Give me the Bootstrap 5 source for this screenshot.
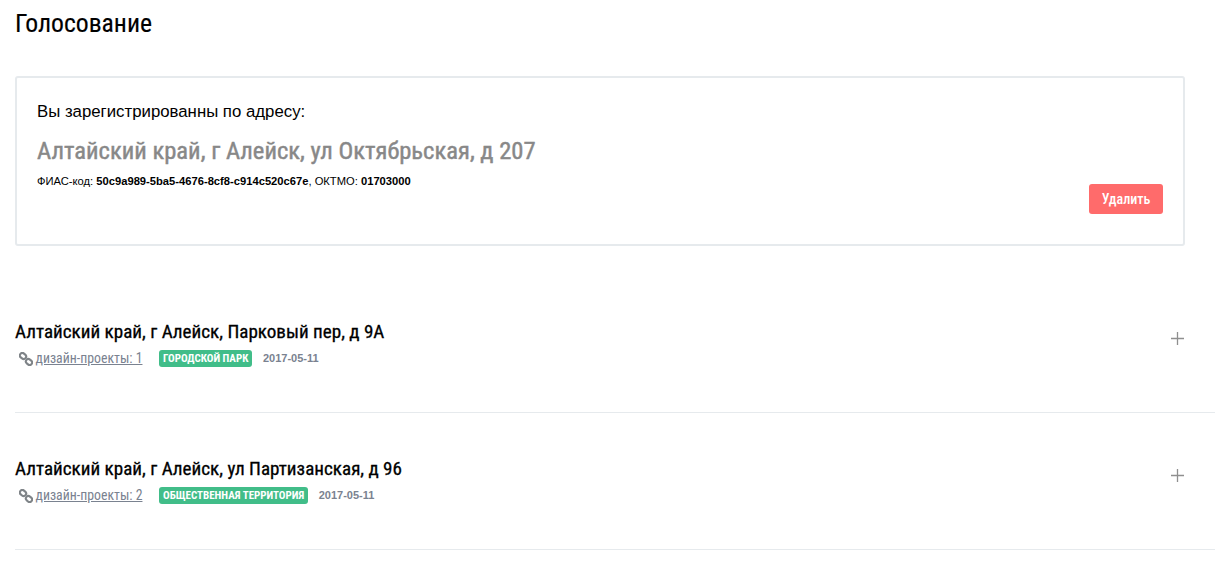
<!DOCTYPE html>
<html lang="ru">
  <head>
    <title>Голосование</title>
    <link href="https://cdn.jsdelivr.net/npm/bootstrap@5.3.3/dist/css/bootstrap.min.css" rel="stylesheet" />
    <style>
      body { background: #fff; color: #000; font-family: "Liberation Sans", Arial, sans-serif; }
      .page-wrap { padding: 0 3px 0 15px; }
      .page-title, .addr-big, .item-title, .item-link, .item-tag, .del-btn {
        font-family: Roboto, "Liberation Sans", sans-serif;
        font-stretch: 75%;
      }
      .page-title { font-size: 25.7px; font-weight: 400; line-height: 30px; margin: 8px 0 38px; -webkit-text-stroke: .15px #000; }
      .addr-box { width: 1170px; height: 170px; border: 2px solid #e6eaed; border-radius: 3px; padding: 23px 20px 22px; }
      .addr-label { font-size: 16.8px; line-height: 22px; margin-bottom: 12px; }
      .addr-big { font-size: 24.6px; font-weight: 400; line-height: 32px; color: #888; margin-bottom: 7px; -webkit-text-stroke: .45px #888; }
      .addr-meta { font-size: 11.2px; line-height: 14px; }
      .del-btn { background: #ff6b6b; color: #fff; border: 0; border-radius: 3px; width: 74px; height: 30px; font-size: 14px; font-weight: 500; padding: 0; }
      .items-list { margin-top: 30px; }
      .item-row { height: 137px; border-bottom: 1px solid #e6eaed; padding-top: 44px; }
      .item-title { font-size: 19.1px; font-weight: 400; line-height: 24px; margin: 0; -webkit-text-stroke: .3px #000; }
      .item-sub { margin-top: 6px; height: 17px; }
      .link-box { width: 127px; margin-right: 17px; padding-left: 4px; white-space: nowrap; }
      .link-ico { width: 14px; height: 14px; margin-right: 3px; flex: none; }
      .item-link { color: #7a8290; font-size: 13.8px; margin-left: -.5px; }
      .item-tag { background: #41bd89; color: #fff; font-size: 11px; font-weight: 700; border-radius: 3px; padding: 0 4px; line-height: 17px; text-transform: uppercase; margin-right: 10.5px; }
      .item-date { color: #7a8290; font-size: 11px; font-weight: 700; }
      .plus-ico { width: 13px; height: 13px; margin: 12px 31px 0 0; }
    </style>
  </head>
  <body>
    <div class="page-wrap">
      <h1 class="page-title">Голосование</h1>
      <div class="addr-box d-flex justify-content-between">
        <div>
          <div class="addr-label">Вы зарегистрированны по адресу:</div>
          <div class="addr-big">Алтайский край, г Алейск, ул Октябрьская, д 207</div>
          <div class="addr-meta">ФИАС-код: <b>50c9a989-5ba5-4676-8cf8-c914c520c67e</b>, ОКТМО: <b>01703000</b></div>
        </div>
        <div class="d-flex align-items-end pb-2">
          <button class="del-btn" type="button">Удалить</button>
        </div>
      </div>
      <div class="items-list">
        <div class="item-row d-flex justify-content-between align-items-start">
          <div>
            <h2 class="item-title">Алтайский край, г Алейск, Парковый пер, д 9А</h2>
            <div class="item-sub d-flex align-items-center">
              <div class="link-box d-flex align-items-center">
                <svg class="link-ico" viewBox="0 0 14 14" fill="none" stroke="#7f8488" stroke-width="2.1"><rect x="-3.3" y="-2.5" width="6.6" height="5" rx="2.5" transform="translate(4 4) rotate(40)"/><rect x="-3.3" y="-2.5" width="6.6" height="5" rx="2.5" transform="translate(10 10) rotate(40)"/></svg>
                <a href="#" class="item-link">дизайн-проекты: 1</a>
              </div>
              <span class="item-tag">Городской парк</span>
              <span class="item-date">2017-05-11</span>
            </div>
          </div>
          <svg class="plus-ico" viewBox="0 0 13 13"><path d="M6.5 0v13M0 6.5h13" stroke="#8f8f8f" stroke-width="1.3"/></svg>
        </div>
        <div class="item-row d-flex justify-content-between align-items-start">
          <div>
            <h2 class="item-title">Алтайский край, г Алейск, ул Партизанская, д 96</h2>
            <div class="item-sub d-flex align-items-center">
              <div class="link-box d-flex align-items-center">
                <svg class="link-ico" viewBox="0 0 14 14" fill="none" stroke="#7f8488" stroke-width="2.1"><rect x="-3.3" y="-2.5" width="6.6" height="5" rx="2.5" transform="translate(4 4) rotate(40)"/><rect x="-3.3" y="-2.5" width="6.6" height="5" rx="2.5" transform="translate(10 10) rotate(40)"/></svg>
                <a href="#" class="item-link">дизайн-проекты: 2</a>
              </div>
              <span class="item-tag">Общественная территория</span>
              <span class="item-date">2017-05-11</span>
            </div>
          </div>
          <svg class="plus-ico" viewBox="0 0 13 13"><path d="M6.5 0v13M0 6.5h13" stroke="#8f8f8f" stroke-width="1.3"/></svg>
        </div>
      </div>
    </div>
    <script src="https://cdn.jsdelivr.net/npm/bootstrap@5.3.3/dist/js/bootstrap.bundle.min.js"></script>
  </body>
</html>
